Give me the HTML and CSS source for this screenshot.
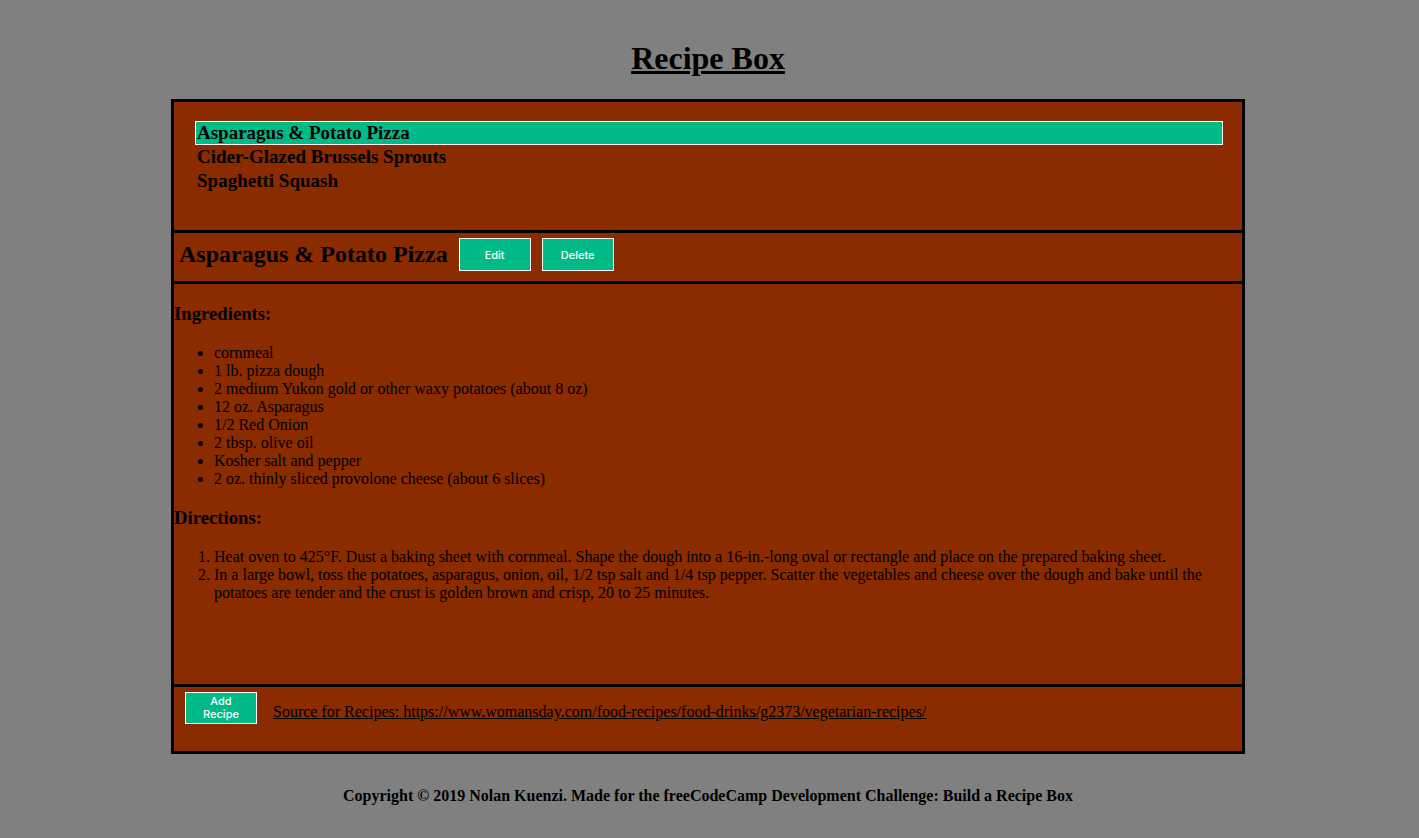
FILE: index.html
```html
<!DOCTYPE html>
<html lang="en">
<head>
  <meta charset="UTF-8">
  <title>Recipe Box</title>
  <link rel="stylesheet" href="styles.css">
</head>
<body>

<h1 class="title">Recipe Box</h1>

<div class="box">
  <ul class="recipe-list">
    <li class="recipe-item selected">Asparagus &amp; Potato Pizza</li>
    <li class="recipe-item">Cider-Glazed Brussels Sprouts</li>
    <li class="recipe-item">Spaghetti Squash</li>
  </ul>

  <div class="recipe-head">
    <h2>Asparagus &amp; Potato Pizza</h2>
    <button type="button" class="btn">Edit</button>
    <button type="button" class="btn">Delete</button>
  </div>

  <div class="recipe-body">
    <h3>Ingredients:</h3>
    <ul>
      <li>cornmeal</li>
      <li>1 lb. pizza dough</li>
      <li>2 medium Yukon gold or other waxy potatoes (about 8 oz)</li>
      <li>12 oz. Asparagus</li>
      <li>1/2 Red Onion</li>
      <li>2 tbsp. olive oil</li>
      <li>Kosher salt and pepper</li>
      <li>2 oz. thinly sliced provolone cheese (about 6 slices)</li>
    </ul>

    <h3>Directions:</h3>
    <ol>
      <li>Heat oven to 425°F. Dust a baking sheet with cornmeal. Shape the dough into a 16-in.-long oval or rectangle and place on the prepared baking sheet.</li>
      <li>In a large bowl, toss the potatoes, asparagus, onion, oil, 1/2 tsp salt and 1/4 tsp pepper. Scatter the vegetables and cheese over the dough and bake until the potatoes are tender and the crust is golden brown and crisp, 20 to 25 minutes.</li>
    </ol>
  </div>

  <div class="box-foot">
    <button type="button" class="btn btn-add">Add<br>Recipe</button>
    <a href="#" class="source">Source for Recipes: https://www.womansday.com/food-recipes/food-drinks/g2373/vegetarian-recipes/</a>
  </div>
</div>

<p class="copyright">Copyright © 2019 Nolan Kuenzi. Made for the freeCodeCamp Development Challenge: Build a Recipe Box</p>

</body>
</html>
```

FILE: styles.css
```css
body {
  margin: 0 3px 0 0;
  background-color: #808080;
  font-family: "Liberation Serif", "Times New Roman", serif;
  font-size: 16px;
  color: #000;
}

.title {
  text-align: center;
  text-decoration: underline;
  font-size: 32px;
  margin: 40px 0 22px;
}

.box {
  width: 1068px;
  margin: 0 auto;
  border: 3px solid #000;
  background-color: #8a2b00;
}

.recipe-list {
  list-style: none;
  margin: 0;
  padding: 19px 19px 0 21px;
  height: 109px;
  border-bottom: 3px solid #000;
}

.recipe-item {
  font-size: 19px;
  font-weight: bold;
  line-height: 22px;
  padding-left: 1px;
  border: 1px solid transparent;
}

.recipe-item.selected {
  background-color: #00bb88;
  border-color: #fff;
}

.recipe-head {
  display: flex;
  align-items: center;
  gap: 11px;
  height: 51px;
  box-sizing: border-box;
  padding: 0 5px 5px;
  border-bottom: 3px solid #000;
}

.recipe-head h2 {
  font-size: 24px;
  margin: 0;
}

.btn {
  width: 72px;
  height: 33px;
  background-color: #00bb88;
  color: #fff;
  border: 1px solid #fff;
  font-family: Inter, "Noto Sans", sans-serif;
  font-size: 11px;
  font-weight: 500;
  padding: 0;
  cursor: pointer;
}

.recipe-body {
  height: 400px;
  overflow: hidden;
  border-bottom: 3px solid #000;
}

.recipe-body h3 {
  font-size: 18.72px;
  margin: 19px 0;
}

.recipe-body ul,
.recipe-body ol {
  margin: 19px 0;
  padding-left: 40px;
}

.box-foot {
  height: 64px;
  box-sizing: border-box;
  padding: 5px 11px;
  display: flex;
  align-items: flex-start;
  gap: 16px;
}

.btn-add {
  height: 32px;
  line-height: 13px;
}

.source {
  color: #000;
  margin-top: 11px;
}

.copyright {
  text-align: center;
  font-weight: bold;
  margin: 33px 0 0;
}
```
